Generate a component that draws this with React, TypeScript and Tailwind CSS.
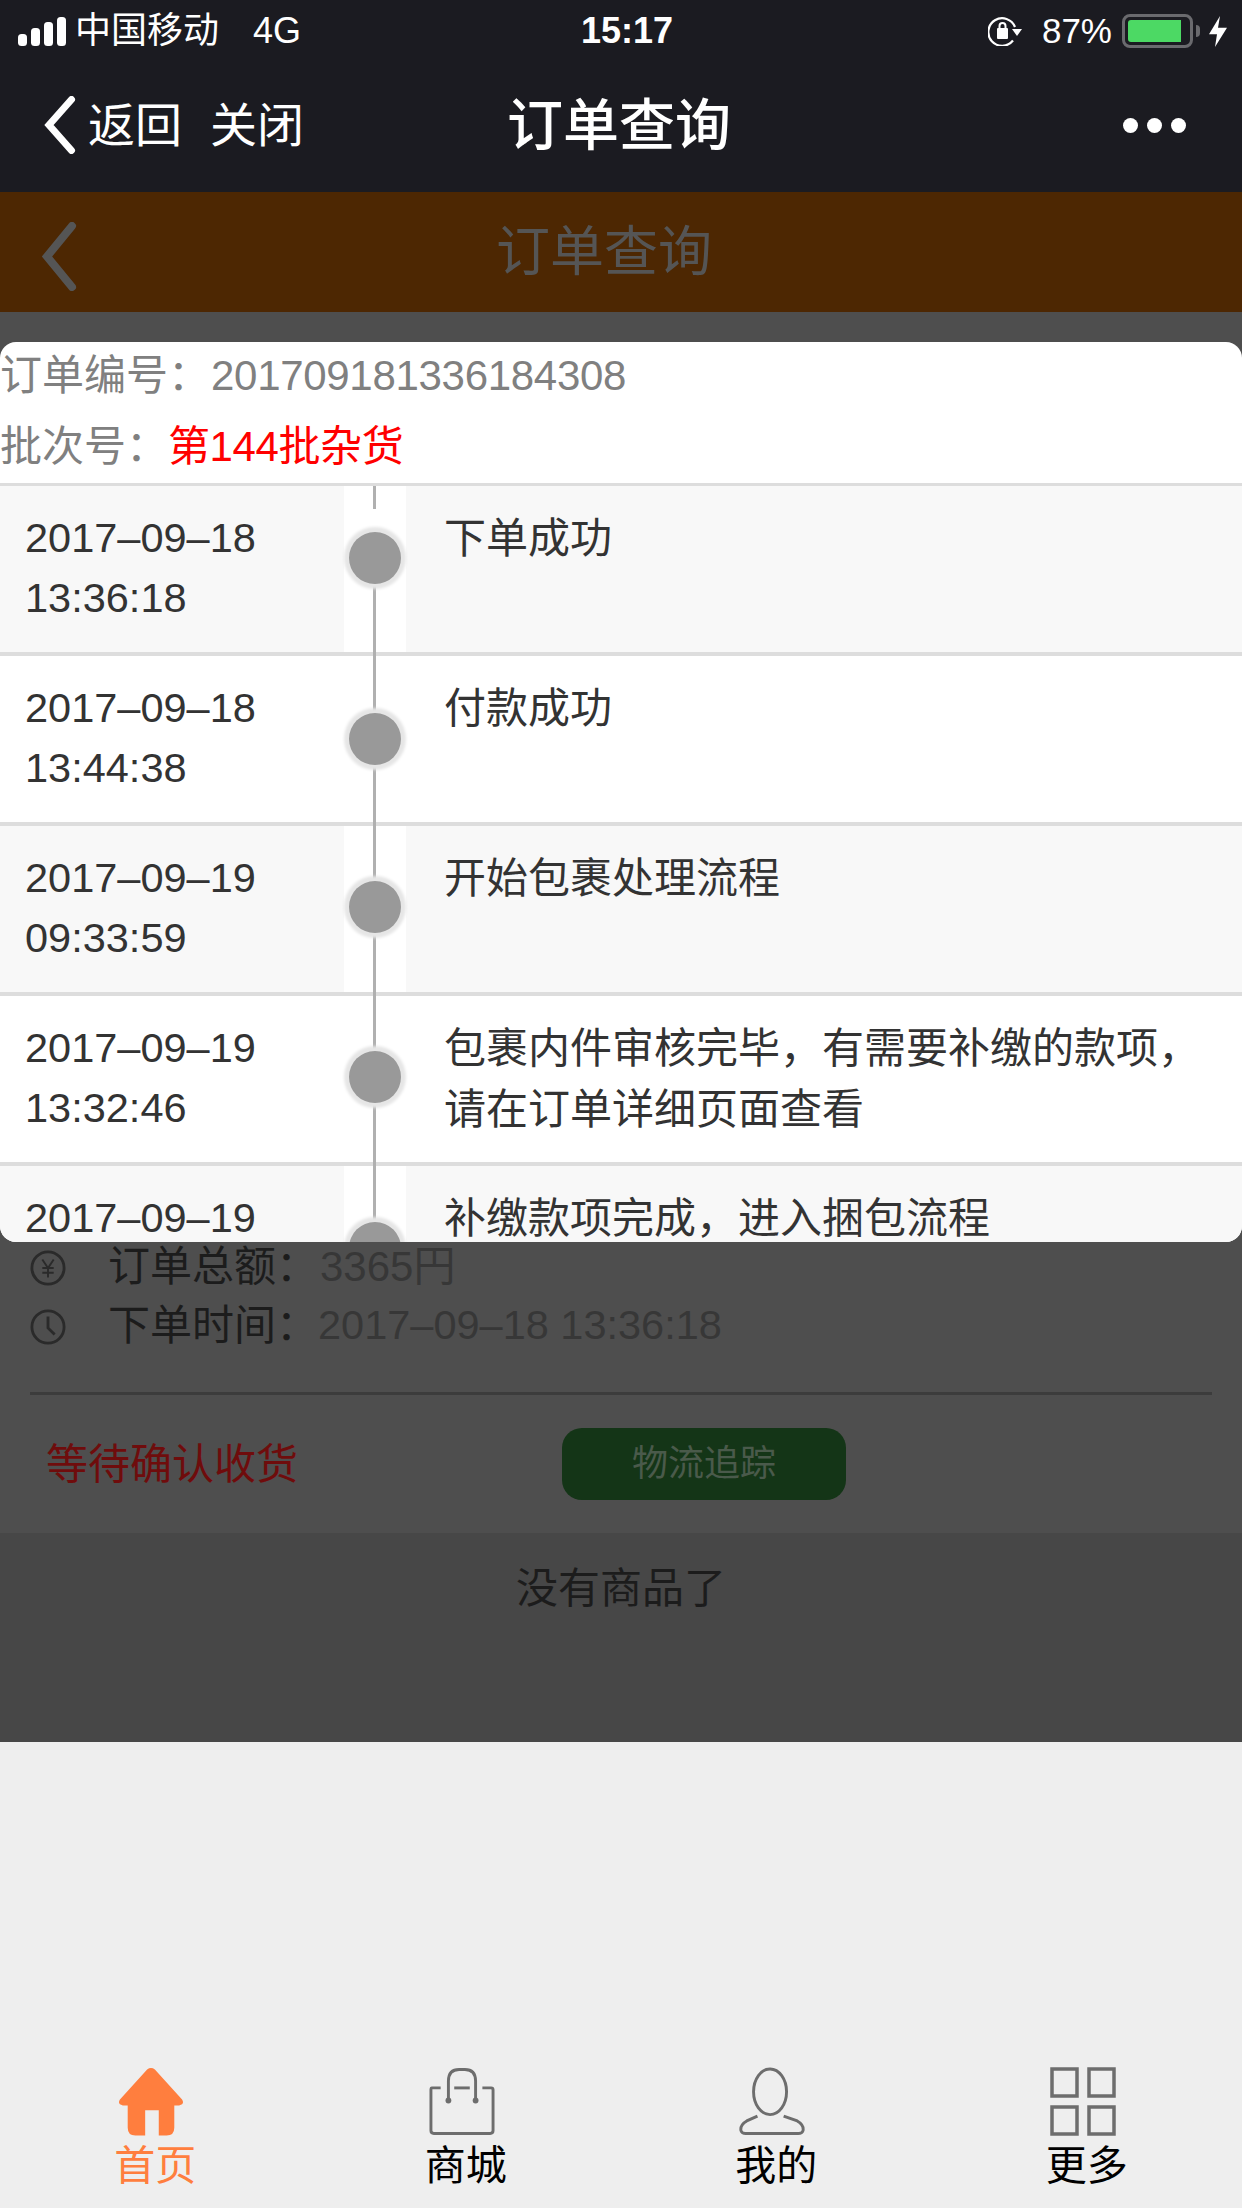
import type { ReactNode } from "react";

const sans = "font-['Liberation_Sans','Noto_Sans_CJK_SC',sans-serif]";

const rows = [
  { date: "2017–09–18", time: "13:36:18", text: ["下单成功"], dot: "top-[46px]", gap: true },
  { date: "2017–09–18", time: "13:44:38", text: ["付款成功"], dot: "top-[57px]", gap: false },
  { date: "2017–09–19", time: "09:33:59", text: ["开始包裹处理流程"], dot: "top-[55px]", gap: false },
  { date: "2017–09–19", time: "13:32:46", text: ["包裹内件审核完毕，有需要补缴的款项，", "请在订单详细页面查看"], dot: "top-[55px]", gap: false },
  { date: "2017–09–19", time: "", text: ["补缴款项完成，进入捆包流程"], dot: "top-[56px]", gap: false },
];

function Signal() {
  return (
    <svg width="48" height="29" viewBox="0 0 48 29" fill="#fff">
      <rect x="0" y="17" width="9" height="12" rx="3.5" />
      <rect x="13" y="11" width="9" height="18" rx="3.5" />
      <rect x="26" y="5" width="9" height="24" rx="3.5" />
      <rect x="39" y="0" width="9" height="29" rx="3.5" />
    </svg>
  );
}

function RotationLock() {
  return (
    <svg width="34" height="30" viewBox="0 0 34 30" fill="none" stroke="#fff" strokeWidth="2.2">
      <path d="M27 11 A13.8 13.8 0 1 0 25 24.5" />
      <path d="M24 13 H34 L29 20 Z" fill="#fff" stroke="none" />
      <rect x="9" y="12" width="11" height="11" rx="1" fill="#fff" stroke="none" />
      <path d="M11.5 12 V10 a3 3 0 0 1 6 0 V12" strokeWidth="2" />
    </svg>
  );
}

function Chevron({ color, w, h, sw }: { color: string; w: number; h: number; sw: number }) {
  return (
    <svg width={w} height={h} viewBox={`0 0 ${w} ${h}`} fill="none" stroke={color} strokeWidth={sw} strokeLinecap="round">
      <path d={`M${w - sw / 2 - 1} ${sw / 2} L${sw} ${h / 2} L${w - sw / 2 - 1} ${h - sw / 2}`} />
    </svg>
  );
}

function TimelineRow({ row, alt }: { row: (typeof rows)[number]; alt: boolean }) {
  return (
    <div className={`flex h-[170px] shrink-0 border-b-4 border-[#dddddd] ${alt ? "bg-[#f8f8f8]" : "bg-white"}`}>
      <div className="w-[344px] shrink-0 pl-[25px] pt-[22px] text-[41.5px] leading-[60px] text-[#333333]">
        <div>{row.date}</div>
        <div>{row.time}</div>
      </div>
      <div className="relative w-[62px] shrink-0 bg-white">
        <div className="absolute bottom-[-4px] left-[29px] top-0 w-[3px] bg-[#b0b0b0]" />
        {row.gap && <div className="absolute left-0 top-[23px] h-[23px] w-[62px] bg-white" />}
        <div className={`absolute left-[5px] size-[52px] rounded-full bg-[#999999] shadow-[0_0_3px_5px_#e6e6e6] ${row.dot}`} />
      </div>
      <div className="flex-1 pl-[38px] pt-[22px] text-[42px] leading-[61px] text-[#333333]">
        {row.text.map((t) => (
          <div key={t} className="whitespace-nowrap">{t}</div>
        ))}
      </div>
    </div>
  );
}

function Tab({ label, active, children }: { label: string; active?: boolean; children: ReactNode }) {
  return (
    <div className={`flex flex-col items-center ${active ? "text-[#ff7e3e]" : "text-black"}`}>
      <div className="mr-[8px] h-[70px]">{children}</div>
      <div className="mt-[3px] text-[41px] leading-[52px]">{label}</div>
    </div>
  );
}

export default function App() {
  return (
    <div className={`relative flex h-[2208px] w-[1242px] flex-col overflow-hidden bg-[#eeeeee] ${sans}`}>
      <header className="h-[192px] shrink-0 bg-[#1b1b21] text-white">
        <div className="flex h-[62px] items-center justify-between pl-[18px] pr-[15px]">
          <div className="flex w-[420px] items-center">
            <Signal />
            <span className="ml-[9px] text-[36px]">中国移动</span>
            <span className="ml-[34px] text-[36px]">4G</span>
          </div>
          <div className="ml-[9px] text-[36px] font-bold">15:17</div>
          <div className="flex w-[420px] items-center justify-end">
            <RotationLock />
            <span className="ml-[20px] text-[35px]">87%</span>
            <div className="ml-[10px] h-[34px] w-[71px] rounded-[8px] border-[3px] border-[#6a6a6e] p-[3px]">
              <div className="h-full w-[53px] rounded-l-[3px] bg-[#4cd964]" />
            </div>
            <div className="ml-[3px] h-[12px] w-[4px] rounded-r-full bg-[#6a6a6e]" />
            <svg className="ml-[9px]" width="18" height="31" viewBox="0 0 18 34" fill="#fff" preserveAspectRatio="none">
              <path d="M11 0 L0 20 H8 L6 34 L18 13 H9 Z" />
            </svg>
          </div>
        </div>
        <div className="relative flex h-[130px] items-center justify-between pb-[4px] pl-[42px] pr-[56px]">
          <div className="flex items-center">
            <Chevron color="#ffffff" w={34} h={58} sw={7} />
            <span className="ml-[12px] mt-[3px] text-[47px]">返回</span>
            <span className="ml-[28px] mt-[3px] text-[47px]">关闭</span>
          </div>
          <div className="flex gap-[9px]">
            <div className="size-[15px] rounded-full bg-white" />
            <div className="size-[15px] rounded-full bg-white" />
            <div className="size-[15px] rounded-full bg-white" />
          </div>
          <div className="absolute inset-x-0 top-[31px] pr-[4px] text-center text-[56px] font-medium leading-[66px]">订单查询</div>
        </div>
      </header>

      <div className="relative flex h-[120px] shrink-0 items-center justify-center bg-[#4d2702] pr-[34px] text-[54px] text-[#555555]">
        <div className="absolute left-[39px] top-[30px]">
          <Chevron color="#555555" w={38} h={69} sw={8} />
        </div>
        订单查询
      </div>

      <section className="h-[1430px] shrink-0 bg-[#4e4e4e]">
        <div className="h-[925px]" />
        <div className="flex h-[59px] items-center pl-[30px] text-[42px] text-[#1c1c1c]">
          <svg width="36" height="36" viewBox="0 0 38 38" fill="none" stroke="#2a2a2a" strokeWidth="3" className="mt-[3px]">
            <circle cx="19" cy="19" r="17" />
            <path d="M13 10 L19 19 L25 10 M19 19 V29 M13 19 H25 M13 24 H25" strokeWidth="2" />
          </svg>
          <span className="ml-[42px]">订单总额：</span>
          <span className="ml-[2px] text-[#373737]">3365円</span>
        </div>
        <div className="flex h-[58px] items-center pl-[30px] text-[42px] text-[#1c1c1c]">
          <svg width="36" height="36" viewBox="0 0 38 38" fill="none" stroke="#2a2a2a" strokeWidth="3" className="mt-[4px]">
            <circle cx="19" cy="19" r="17" />
            <path d="M19 8 V20 L26 27" />
          </svg>
          <span className="ml-[42px]">下单时间：</span>
          <span className="text-[41.5px] text-[#373737]">2017–09–18 13:36:18</span>
        </div>
        <div className="mx-[30px] mt-[38px] h-[3px] bg-[#3c3c3c]" />
        <div className="flex h-[138px] items-center pl-[46px]">
          <span className="w-[516px] text-[42px] text-[#6f0c0c]">等待确认收货</span>
          <div className="flex h-[72px] w-[284px] items-center justify-center rounded-[20px] bg-[#143517] text-[36px] text-[#4a5a4b]">
            物流追踪
          </div>
        </div>
        <div className="flex h-[209px] justify-center bg-[#474747] pt-[26px] text-[42px] leading-[60px] text-[#1c1c1c]">
          没有商品了
        </div>
      </section>

      <nav className="mt-[325px] grid grid-cols-4">
        <Tab label="首页" active>
          <svg width="66" height="69" viewBox="0 0 68 70" fill="#ff7e3e">
            <path d="M30 2 Q34 -1 38 2 L66 33 Q69 38 63 39 H58 V62 Q58 70 50 70 H42 V44 H28 V70 H18 Q10 70 10 62 V39 H5 Q-1 38 2 33 Z" />
          </svg>
        </Tab>
        <Tab label="商城">
          <svg width="66" height="69" viewBox="0 0 68 70" fill="none" stroke="#6d6d6d" strokeWidth="3">
            <path d="M12 21 H3 Q2 21 2 23 V65 Q2 68 5 68 H63 Q66 68 66 65 V23 Q66 21 64 21 H55" />
            <path d="M20 34 V14 Q20 2 31 2 H37 Q48 2 48 14 V34" />
            <path d="M26 21 H42" />
            <circle cx="20" cy="34" r="3" fill="#6d6d6d" stroke="none" />
            <circle cx="48" cy="34" r="3" fill="#6d6d6d" stroke="none" />
          </svg>
        </Tab>
        <Tab label="我的">
          <svg width="66" height="69" viewBox="0 0 68 70" fill="none" stroke="#6d6d6d" strokeWidth="3">
            <ellipse cx="32" cy="25" rx="17" ry="23.5" />
            <path d="M19 50 L8 55 Q1 59 2 65 Q3 68 7 68 H61 Q65 68 66 65 Q67 59 60 55 L46 50" />
          </svg>
        </Tab>
        <Tab label="更多">
          <svg width="66" height="69" viewBox="0 0 66 69" fill="none" stroke="#6d6d6d" strokeWidth="3.5">
            <rect x="2" y="2" width="25" height="27" />
            <rect x="39" y="2" width="25" height="27" />
            <rect x="2" y="40" width="25" height="27" />
            <rect x="39" y="40" width="25" height="27" />
          </svg>
        </Tab>
      </nav>

      <div className="absolute inset-x-0 top-[342px] flex h-[900px] flex-col overflow-hidden rounded-[16px] bg-white">
        <div className="h-[141px] shrink-0 text-[42px] text-[#808080]">
          <div className="whitespace-nowrap leading-[68px]">
            订单编号：<span className="ml-[1px] tracking-[-0.3px]">201709181336184308</span>
          </div>
          <div className="whitespace-nowrap leading-[73px]">
            批次号：<span className="tracking-[-0.4px] text-[#ff0000]">第144批杂货</span>
          </div>
        </div>
        <div className="h-[3px] shrink-0 bg-[#dddddd]" />
        {rows.map((row, i) => (
          <TimelineRow key={row.time + i} row={row} alt={i % 2 === 0} />
        ))}
      </div>
    </div>
  );
}
